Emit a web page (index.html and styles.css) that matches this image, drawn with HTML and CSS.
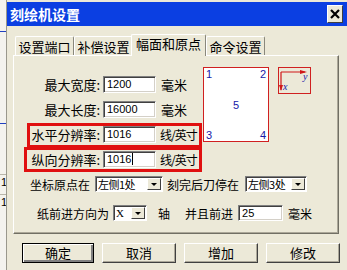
FILE: index.html
```html
<!DOCTYPE html>
<html lang="zh-CN">
<head>
    <meta charset="UTF-8">
    <title>刻绘机设置</title>
    <link rel="stylesheet" href="styles.css">
</head>
<body>

<div class="desk">
    <!-- fenetre derriere, on n'en voit qu'un bord -->
    <div class="behind">
        <span class="bh-blue bh-top"></span>
        <span class="bh-blue bh-mid"></span>
        <span class="bh-cell">1</span>
        <span class="bh-cell">1</span>
    </div>

    <div class="dialog">
        <div class="titlebar">
            <span class="title">刻绘机设置</span>
            <span class="close">
                <svg width="10" height="10" viewBox="0 0 10 10">
                    <path d="M1 1 L9 9 M9 1 L1 9" stroke="#000" stroke-width="2.2"/>
                </svg>
            </span>
        </div>

        <div class="tabs">
            <div class="tab">设置端口</div>
            <div class="tab">补偿设置</div>
            <div class="tab active">幅面和原点</div>
            <div class="tab">命令设置</div>
        </div>

        <div class="panel">
            <div class="top">
                <div class="fields">
                    <div class="field">
                        <label>最大宽度:</label>
                        <div class="edit">1200</div>
                        <span class="unit">毫米</span>
                    </div>
                    <div class="field">
                        <label>最大长度:</label>
                        <div class="edit">16000</div>
                        <span class="unit">毫米</span>
                    </div>
                    <div class="field mark mark-h">
                        <label>水平分辨率:</label>
                        <div class="edit">1016</div>
                        <span class="unit small">线/英寸</span>
                    </div>
                    <div class="field mark mark-v">
                        <label>纵向分辨率:</label>
                        <div class="edit">1016<span class="caret"></span></div>
                        <span class="unit small">线/英寸</span>
                    </div>
                </div>

                <div class="sheet">
                    <div class="corners"><span>1</span><span>2</span></div>
                    <div class="center">5</div>
                    <div class="corners"><span>3</span><span>4</span></div>
                </div>

                <div class="axes">
                    <svg width="31" height="25" viewBox="0 0 31 25">
                        <path d="M2 4 H26 M2 4 V22" stroke="#d01818" stroke-width="1.2" fill="none"/>
                        <path d="M21 2 L28 4 L21 6 Z" fill="#d01818"/>
                        <path d="M0 17 L2 23 L4 17 Z" fill="#d01818"/>
                        <text x="24" y="12" class="axis-txt">y</text>
                        <text x="4" y="22" class="axis-txt">x</text>
                    </svg>
                </div>
            </div>

            <div class="line line-origin">
                <span>坐标原点在</span>
                <div class="combo combo-a"><span class="combo-val">左侧1处</span><span class="combo-btn"></span></div>
                <span class="after">刻完后刀停在</span>
                <div class="combo combo-b"><span class="combo-val">左侧3处</span><span class="combo-btn"></span></div>
            </div>

            <div class="line line-feed">
                <span>纸前进方向为</span>
                <div class="combo combo-c"><span class="combo-val latin">X</span><span class="combo-btn"></span></div>
                <span class="axis-name">轴</span>
                <span class="forward">并且前进</span>
                <div class="edit edit-feed">25</div>
                <span class="unit">毫米</span>
            </div>
        </div>

        <div class="buttons">
            <button class="btn default">确定</button>
            <button class="btn">取消</button>
            <button class="btn">增加</button>
            <button class="btn">修改</button>
        </div>
    </div>
</div>

</body>
</html>
```

FILE: styles.css
```css
* {
    margin: 0;
    padding: 0;
    box-sizing: border-box;
}

body {
    width: 347px;
    height: 270px;
    overflow: hidden;
    background-color: #ece9d8;
    font-family: "Noto Sans CJK SC", sans-serif;
    font-size: 13px;
    color: #000;
}

.desk {
    display: flex;
    height: 270px;
}

/* bord de la fenetre derriere */
.behind {
    width: 7px;
    display: flex;
    flex-direction: column;
    background-color: #f4f3ee;
    border-right: 1px solid #9a988c;
}

.bh-blue {
    display: block;
    height: 1px;
    background-color: #2040c0;
}

.bh-top {
    margin-top: 31px;
}

.bh-mid {
    margin-top: 91px;
}

.bh-cell {
    margin-top: 50px;
    height: 16px;
    border-top: 1px solid #b8b6aa;
    font-family: "Liberation Sans", sans-serif;
    font-size: 11px;
    line-height: 14px;
    overflow: hidden;
    text-indent: 1px;
}

.bh-cell + .bh-cell {
    margin-top: 4px;
}

.dialog {
    flex: 1;
    padding-top: 2px;
    background-color: #ece9d8;
}

.titlebar {
    height: 24px;
    display: flex;
    justify-content: space-between;
    align-items: center;
    padding: 0 4px 0 3px;
    background-color: #0b3fe2;
}

.title {
    color: #fff;
    font-weight: bold;
    font-size: 14px;
    line-height: 18px;
}

.close {
    width: 16px;
    height: 18px;
    display: flex;
    justify-content: center;
    align-items: center;
    background-color: #ece9d8;
    border-top: 1px solid #fff;
    border-left: 1px solid #fff;
    border-right: 1px solid #404040;
    border-bottom: 1px solid #404040;
}

.tabs {
    display: flex;
    align-items: flex-end;
    height: 21px;
    margin: 8px 0 0 8px;
    position: relative;
    z-index: 1;
}

.tab {
    width: 59px;
    height: 19px;
    text-align: center;
    line-height: 19px;
    border-top: 1px solid #fff;
    border-left: 1px solid #fff;
    border-right: 1px solid #8a887c;
    border-radius: 2px 2px 0 0;
}

.tab.active {
    width: 75px;
    height: 22px;
    margin: 0 0 -1px -2px;
    line-height: 17px;
    background-color: #ece9d8;
}

.panel {
    width: 326px;
    height: 179px;
    margin-left: 6px;
    border-top: 1px solid #fff;
    border-left: 1px solid #fff;
    border-right: 1px solid #716f64;
    border-bottom: 1px solid #716f64;
    box-shadow: inset -1px -1px #aca899;
}

.top {
    display: flex;
    align-items: flex-start;
}

.fields {
    width: 189px;
    padding-top: 20px;
    display: flex;
    flex-direction: column;
    gap: 8px;
}

.field {
    display: flex;
    align-items: center;
    height: 17px;
    white-space: nowrap;
}

.field label {
    width: 86px;
    text-align: right;
    line-height: 17px;
}

.edit {
    width: 53px;
    height: 17px;
    margin-left: 3px;
    padding: 1px 0 0 3px;
    background-color: #fff;
    border-top: 1px solid #808080;
    border-left: 1px solid #808080;
    border-right: 1px solid #fff;
    border-bottom: 1px solid #fff;
    box-shadow: inset 1px 1px #404040, inset -1px -1px #d4d0c8;
    font-family: "Liberation Sans", sans-serif;
    font-size: 11px;
    line-height: 13px;
}

.caret {
    display: inline-block;
    width: 1px;
    height: 12px;
    margin-left: 1px;
    vertical-align: -2px;
    background-color: #000;
}

.unit {
    margin-left: 5px;
    line-height: 17px;
}

.unit.small {
    margin-left: 4px;
    font-size: 12px;
    letter-spacing: -1px;
}

/* cadres rouges par-dessus les lignes de resolution */
.mark {
    position: relative;
}

.mark::after {
    content: "";
    position: absolute;
    border: 3px solid #e01010;
    height: 19px;
    right: 1px;
}

.mark-h::after {
    top: -3px;
    left: 13px;
}

.mark-v::after {
    top: -4px;
    left: 10px;
}

.sheet {
    width: 66px;
    height: 75px;
    margin-top: 11px;
    display: flex;
    flex-direction: column;
    justify-content: space-between;
    padding: 0 2px;
    background-color: #fff;
    border: 1px solid #d02020;
    font-family: "Liberation Sans", sans-serif;
    font-size: 11px;
    line-height: 12px;
    color: #1818a8;
}

.corners {
    display: flex;
    justify-content: space-between;
}

.center {
    text-align: center;
}

.axes {
    width: 33px;
    height: 27px;
    margin: 11px 0 0 9px;
    border: 1px solid #d02020;
    background-color: #ece9d8;
}

.axes svg {
    display: block;
}

.axis-txt {
    font-family: "Liberation Serif", serif;
    font-style: italic;
    font-size: 10px;
    fill: #1818a8;
}

.line {
    display: flex;
    align-items: center;
    height: 16px;
    font-size: 12px;
    white-space: nowrap;
}

.line-origin {
    margin-top: 8px;
    padding-left: 16px;
}

.line-feed {
    margin-top: 13px;
    padding-left: 23px;
}

.combo {
    height: 16px;
    display: flex;
    align-items: stretch;
    margin-left: 5px;
    padding: 1px;
    background-color: #fff;
    border-top: 1px solid #808080;
    border-left: 1px solid #808080;
    border-right: 1px solid #fff;
    border-bottom: 1px solid #fff;
    box-shadow: inset 1px 1px #404040;
}

.combo-a {
    width: 68px;
}

.combo-b {
    width: 62px;
    margin-left: 6px;
}

.combo-c {
    width: 34px;
    margin-left: 4px;
}

.combo-val {
    flex: 1;
    padding-left: 1px;
    font-size: 11px;
    line-height: 12px;
    letter-spacing: -0.5px;
}

.combo-val.latin {
    font-family: "Liberation Serif", serif;
    font-size: 11px;
    letter-spacing: 0;
}

.combo-btn {
    width: 14px;
    flex-shrink: 0;
    position: relative;
    background-color: #ece9d8;
    border-top: 1px solid #fff;
    border-left: 1px solid #fff;
    border-right: 1px solid #404040;
    border-bottom: 1px solid #404040;
}

.combo-btn::after {
    content: "";
    position: absolute;
    left: 3px;
    top: 4px;
    border-left: 3px solid transparent;
    border-right: 3px solid transparent;
    border-top: 3px solid #000;
}

.after {
    margin-left: 4px;
}

.axis-name {
    margin-left: 11px;
}

.forward {
    margin-left: 15px;
}

.edit-feed {
    width: 45px;
    height: 16px;
    margin-left: 5px;
}

.buttons {
    display: flex;
    gap: 8px;
    margin: 9px 0 0 15px;
}

.btn {
    width: 74px;
    height: 20px;
    font-family: "Noto Sans CJK SC", sans-serif;
    font-size: 13px;
    line-height: 16px;
    color: #000;
    background-color: #ece9d8;
    border-top: 1px solid #fff;
    border-left: 1px solid #fff;
    border-right: 1px solid #404040;
    border-bottom: 1px solid #404040;
    box-shadow: inset -1px -1px #aca899;
}

.btn.default {
    width: 72px;
    border: 1px solid #000;
    box-shadow: inset 1px 1px #fff, inset -2px -2px #808080;
}
```
